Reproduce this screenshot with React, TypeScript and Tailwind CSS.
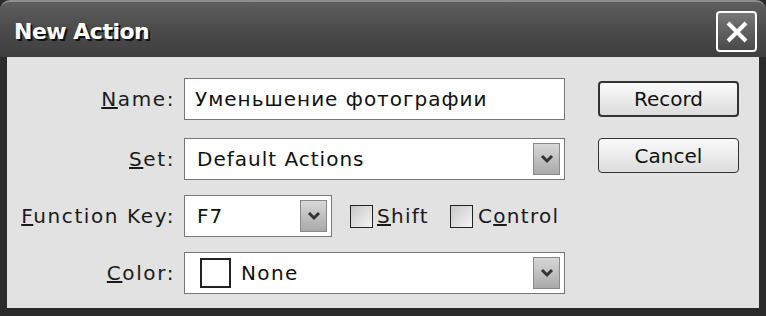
import React from "react";

const font = { fontFamily: '"DejaVu Sans", "Liberation Sans", sans-serif' };

function Arrow() {
  return (
    <div className="flex h-[32px] w-[27px] items-center justify-center border border-[#8a8a8a] bg-gradient-to-b from-[#d8d8d8] to-[#a9a9a9]">
      <svg width="14" height="10" viewBox="0 0 14 10">
        <path d="M2 2 L7 7 L12 2" fill="none" stroke="#333" strokeWidth="3" />
      </svg>
    </div>
  );
}

function Label({ children }: { children: React.ReactNode }) {
  return <div className="w-[177px] pr-[9px] text-right text-[20px] tracking-[1.6px] text-[#1a1a1a]">{children}</div>;
}

export default function App() {
  return (
    <div className="h-[316px] w-[766px] overflow-hidden bg-[#2b2b2b]" style={font}>
      {/* title bar */}
      <div className="flex h-[57px] items-center justify-between rounded-t-[10px] border-t-2 border-[#8c8c8c] bg-gradient-to-b from-[#5e5e5e] via-[#4b4b4b] to-[#3f3f3f] pl-[14px] pr-[9px] pt-[4px]">
        <span className="text-[22px] font-bold tracking-[-0.5px] text-white [text-shadow:2px_2px_0_#111]">New Action</span>
        <div className="flex h-[41px] w-[41px] items-center justify-center rounded-[4px] border-2 border-white bg-gradient-to-b from-[#777] to-[#4a4a4a]">
          <svg width="26" height="26" viewBox="0 0 26 26">
            <path d="M4 4 L22 22 M22 4 L4 22" stroke="white" strokeWidth="4" />
          </svg>
        </div>
      </div>
      {/* body */}
      <div className="mx-[7px] flex h-[251px] bg-[#e2e2e2] pt-[21px]">
        <div className="flex w-[584px] flex-col">
          <div className="flex h-[42px] items-center">
            <Label>
              <u>N</u>ame:
            </Label>
            <div className="flex h-[42px] w-[381px] items-center border border-[#777] bg-white px-[10px] text-[20px] tracking-[1px] text-[#111]">
              Уменьшение фотографии
            </div>
          </div>
          <div className="mt-[18px] flex h-[42px] items-center">
            <Label>
              <u>S</u>et:
            </Label>
            <div className="flex h-[42px] w-[381px] items-center justify-between border border-[#777] bg-white pl-[12px] pr-[4px] text-[20px] tracking-[1px] text-[#111]">
              Default Actions
              <Arrow />
            </div>
          </div>
          <div className="mt-[15px] flex h-[42px] items-center">
            <Label>
              <u>F</u>unction Key:
            </Label>
            <div className="flex h-[42px] w-[148px] items-center justify-between border border-[#777] bg-white pl-[12px] pr-[4px] text-[20px] tracking-[1px] text-[#111]">
              F7
              <Arrow />
            </div>
            <div className="ml-[18px] flex items-center text-[20px] tracking-[1.3px] text-[#1a1a1a]">
              <div className="mr-[4px] h-[23px] w-[23px] border border-[#222] bg-gradient-to-br from-[#c8c8c8] to-[#f4f4f4]" />
              <span>
                <u>S</u>hift
              </span>
              <div className="ml-[21px] mr-[5px] h-[23px] w-[23px] border border-[#222] bg-gradient-to-br from-[#c8c8c8] to-[#f4f4f4]" />
              <span>
                C<u>o</u>ntrol
              </span>
            </div>
          </div>
          <div className="mt-[15px] flex h-[42px] items-center">
            <Label>
              <u>C</u>olor:
            </Label>
            <div className="flex h-[42px] w-[381px] items-center justify-between border border-[#777] bg-white pl-[15px] pr-[4px] text-[20px] tracking-[1.4px] text-[#111]">
              <div className="flex items-center">
                <div className="mr-[10px] h-[30px] w-[31px] border-2 border-[#222] bg-white" />
                None
              </div>
              <Arrow />
            </div>
          </div>
        </div>
        <div className="ml-[7px] flex flex-col gap-[21px] pt-[3px]">
          <div className="flex h-[36px] w-[141px] items-center justify-center rounded-[4px] border-2 border-[#333] bg-gradient-to-b from-[#fafafa] to-[#dcdcdc] text-[20px] text-[#111]">
            Record
          </div>
          <div className="flex h-[35px] w-[141px] items-center justify-center rounded-[4px] border border-[#333] bg-gradient-to-b from-[#fafafa] to-[#dcdcdc] text-[20px] text-[#111]">
            Cancel
          </div>
        </div>
      </div>
    </div>
  );
}
